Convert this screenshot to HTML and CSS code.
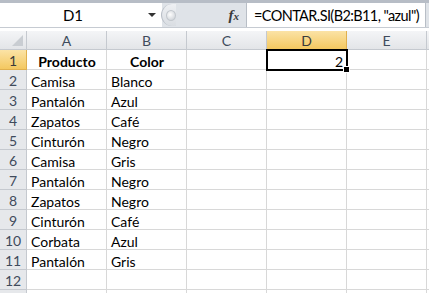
FILE: index.html
```html
<!DOCTYPE html>
<html lang="es">
<head>
    <meta charset="UTF-8">
    <title>CONTAR.SI</title>
    <link rel="stylesheet" href="styles.css">
</head>
<body>
    <div class="formula-bar">
        <div class="name-box">
            <span class="name-text">D1</span>
            <span class="name-arrow"></span>
        </div>
        <div class="bar-mid">
            <span class="grip"><span class="grip-dot"></span></span>
            <span class="fx"><i>f</i><small>x</small></span>
        </div>
        <div class="formula-input">=CONTAR.SI(B2:B11, "azul")</div>
    </div>

    <div class="sheet">
        <div class="corner"><span class="corner-tri"></span></div>
        <div class="col-head">A</div>
        <div class="col-head">B</div>
        <div class="col-head">C</div>
        <div class="col-head active">D</div>
        <div class="col-head">E</div>
        <div class="col-head edge"></div>

        <div class="row-head active">1</div>
        <div class="cell center bold">Producto</div>
        <div class="cell center bold">Color</div>
        <div class="cell"></div>
        <div class="cell right selected">2<span class="handle"></span></div>
        <div class="cell"></div>
        <div class="cell edge"></div>

        <div class="row-head">2</div>
        <div class="cell">Camisa</div>
        <div class="cell">Blanco</div>
        <div class="cell"></div><div class="cell"></div><div class="cell"></div><div class="cell edge"></div>

        <div class="row-head">3</div>
        <div class="cell">Pantalón</div>
        <div class="cell">Azul</div>
        <div class="cell"></div><div class="cell"></div><div class="cell"></div><div class="cell edge"></div>

        <div class="row-head">4</div>
        <div class="cell">Zapatos</div>
        <div class="cell">Café</div>
        <div class="cell"></div><div class="cell"></div><div class="cell"></div><div class="cell edge"></div>

        <div class="row-head">5</div>
        <div class="cell">Cinturón</div>
        <div class="cell">Negro</div>
        <div class="cell"></div><div class="cell"></div><div class="cell"></div><div class="cell edge"></div>

        <div class="row-head">6</div>
        <div class="cell">Camisa</div>
        <div class="cell">Gris</div>
        <div class="cell"></div><div class="cell"></div><div class="cell"></div><div class="cell edge"></div>

        <div class="row-head">7</div>
        <div class="cell">Pantalón</div>
        <div class="cell">Negro</div>
        <div class="cell"></div><div class="cell"></div><div class="cell"></div><div class="cell edge"></div>

        <div class="row-head">8</div>
        <div class="cell">Zapatos</div>
        <div class="cell">Negro</div>
        <div class="cell"></div><div class="cell"></div><div class="cell"></div><div class="cell edge"></div>

        <div class="row-head">9</div>
        <div class="cell">Cinturón</div>
        <div class="cell">Café</div>
        <div class="cell"></div><div class="cell"></div><div class="cell"></div><div class="cell edge"></div>

        <div class="row-head">10</div>
        <div class="cell">Corbata</div>
        <div class="cell">Azul</div>
        <div class="cell"></div><div class="cell"></div><div class="cell"></div><div class="cell edge"></div>

        <div class="row-head">11</div>
        <div class="cell">Pantalón</div>
        <div class="cell">Gris</div>
        <div class="cell"></div><div class="cell"></div><div class="cell"></div><div class="cell edge"></div>

        <div class="row-head">12</div>
        <div class="cell"></div><div class="cell"></div><div class="cell"></div><div class="cell"></div><div class="cell"></div><div class="cell edge"></div>

        <div class="row-head stub"></div>
        <div class="cell"></div><div class="cell"></div><div class="cell"></div><div class="cell"></div><div class="cell"></div><div class="cell edge"></div>
    </div>
</body>
</html>
```

FILE: styles.css
```css
body {
    margin: 0;
    padding: 0;
    width: 429px;
    height: 293px;
    overflow: hidden;
    background: #fff;
    font-family: Lato, 'Liberation Sans', sans-serif;
    font-size: 14px;
    color: #000;
}
.formula-bar {
    display: flex;
    height: 24px;
    border-top: 3px solid #b7bdc6;
    border-bottom: 1px solid #c6cbd2;
    background: #dfe3e8;
    margin-bottom: 3px;
}
.name-box {
    width: 162px;
    display: flex;
    align-items: center;
    background: #fff;
}
.name-text {
    width: 146px;
    text-align: center;
    font-size: 15px;
}
.name-arrow {
    width: 0;
    height: 0;
    border-left: 4px solid transparent;
    border-right: 4px solid transparent;
    border-top: 4px solid #333;
    margin-left: 2px;
}
.bar-mid {
    width: 84px;
    display: flex;
    align-items: center;
    justify-content: space-between;
    background: #dfe3e8;
}
.grip {
    width: 14px;
    height: 22px;
    border-radius: 11px 0 0 11px;
    border-left: 1px solid #b8bec6;
    background: linear-gradient(#eef0f3, #d9dde2);
    display: flex;
    align-items: center;
    justify-content: center;
    margin-left: -1px;
}
.grip-dot {
    width: 9px;
    height: 9px;
    border-radius: 50%;
    background: radial-gradient(circle at 40% 40%, #fdfdfd, #c7ccd2);
    border: 1px solid #c2c7cd;
    margin-left: 4px;
}
.fx {
    font-family: 'Liberation Serif', serif;
    font-size: 15px;
    color: #3a3a3a;
    margin-right: 7px;
    font-weight: bold;
}
.fx small {
    font-size: 11px;
    font-style: italic;
}
.formula-input {
    flex: 1;
    background: #fff;
    border-left: 1px solid #b8bec6;
    border-right: 1px solid #b8bec6;
    margin-right: 3px;
    padding-left: 7px;
    display: flex;
    align-items: center;
    font-size: 14.5px;
    letter-spacing: -0.6px;
    white-space: nowrap;
    overflow: hidden;
}
.sheet {
    display: grid;
    grid-template-columns: 27px repeat(5, 80px) 2px;
    grid-template-rows: 19px repeat(12, 20px) 3px;
    overflow: hidden;
}
.corner,
.col-head,
.row-head {
    background: linear-gradient(#f4f5f7, #e3e5e8);
    color: #3f4b5c;
    box-sizing: border-box;
    border-right: 1px solid #c5c9cf;
    border-bottom: 1px solid #c5c9cf;
    display: flex;
    align-items: center;
    justify-content: center;
    font-size: 14px;
}
.row-head {
    background: #e6e8eb;
    padding-top: 2px;
}
.row-head.stub {
    border-bottom: none;
}
.corner {
    position: relative;
}
.corner-tri {
    position: absolute;
    right: 3px;
    bottom: 3px;
    width: 0;
    height: 0;
    border-left: 11px solid transparent;
    border-bottom: 11px solid #c9cdd2;
}
.col-head.active,
.row-head.active {
    background: linear-gradient(#fbe3a6, #f4c860);
    border-color: #e0b04e;
    color: #3b3b3b;
}
.cell {
    box-sizing: border-box;
    border-right: 1px solid #d8d8d8;
    border-bottom: 1px solid #d8d8d8;
    padding: 3px 3px 0 4px;
    white-space: nowrap;
    display: flex;
    align-items: center;
}
.col-head.edge,
.cell.edge {
    border-right: none;
}
.center {
    justify-content: center;
}
.right {
    justify-content: flex-end;
}
.bold {
    font-weight: bold;
}
.selected {
    position: relative;
    outline: 2px solid #000;
    outline-offset: -1px;
    z-index: 1;
}
.handle {
    position: absolute;
    right: -4px;
    bottom: -4px;
    width: 5px;
    height: 5px;
    background: #000;
    border: 1px solid #fff;
}
```
